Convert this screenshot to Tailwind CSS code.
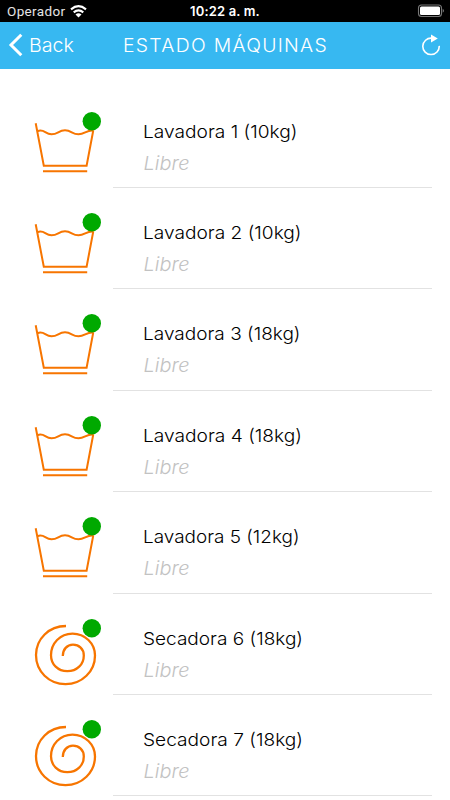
<!DOCTYPE html>
<html lang="es">
<head>
<meta charset="utf-8">
<title>Estado máquinas</title>
<script src="https://cdn.jsdelivr.net/npm/@tailwindcss/browser@4"></script>
</head>
<body class="bg-white">
<svg class="hidden">
  <symbol id="washer" viewBox="0 0 80 101.4">
    <g transform="translate(0 13.3)" fill="none" stroke="#f77500" stroke-width="2">
      <path d="M15.7 23 L23.8 65.5 H66.6 L73.3 30"/>
      <path d="M17.3 31 C24 28 25 34 31.5 34 S38.5 30 45 30 S52 34 58.5 34 S66 29.7 73.3 30.3"/>
      <path d="M23 71 H67.2"/>
    </g>
  </symbol>
  <symbol id="dryer" viewBox="0 0 80 101.4">
    <path transform="translate(0 16.4)" fill="none" stroke="#f77500" stroke-width="2.3" d="M46 15.6 C29 15.6 16 28.5 16 44.7 C16 61 29 73.7 45.5 73.7 C62 73.7 75 61 75 45 C75 33 65 23.2 52.5 23.2 C40 23.2 31 33 31 44.8 C31 54 38 60.8 47.3 60.8 C57 60.8 63.8 54 63.8 45 C63.8 38.5 59 34.3 53 34.3 C47 34.3 42.8 39 42.8 45.6"/>
  </symbol>
</svg>
<div class="w-[450px] h-[800px] overflow-hidden bg-white flex flex-col">
  <div class="h-[22px] shrink-0 bg-black text-white grid grid-cols-3 items-center font-['Inter',sans-serif] text-[13px] leading-[22px]">
    <div class="flex items-center pl-[7px] gap-[5px]">
      <span class="font-['Roboto',sans-serif] text-[13.5px] tracking-[0.35px] text-[#e5e5e5]">Operador</span>
      <svg class="w-[17px] h-[13px]" viewBox="0 0 17 13" fill="none" stroke="white" stroke-width="2.1"><path d="M1 4.4 Q8.5 -2 16 4.4M3.7 7.4 Q8.5 3.4 13.3 7.4"/><path fill="white" stroke="none" d="M5.5 9.5 Q8.5 7.1 11.5 9.5 L8.5 12.5Z"/></svg>
    </div>
    <div class="text-center font-semibold tracking-[0.15px] whitespace-nowrap">10:22 a. m.</div>
    <div class="flex justify-end pr-[5px]">
      <svg class="w-[28px] h-[14px]" viewBox="0 0 28 14"><rect x="1.5" y="1" width="23" height="11.5" rx="3" fill="none" stroke="#777" stroke-width="1.1"/><rect x="3" y="2.5" width="20" height="8.5" rx="1.5" fill="white"/><path d="M25.7 4.8 Q28.3 6.8 25.7 8.8Z" fill="#777"/></svg>
    </div>
  </div>
  <div class="h-[47px] shrink-0 bg-[#37b8f1] text-white flex items-center font-['Inter',sans-serif] font-light">
    <svg class="ml-[8px] w-[15px] h-[26px]" viewBox="0 0 15 26" fill="none" stroke="white" stroke-width="3"><path d="M13.3 1.8 L3 12 L13.3 22.2"/></svg>
    <svg class="ml-[6px] w-[45px] h-[26px] overflow-visible"><text x="0" y="19" textLength="100%" lengthAdjust="spacingAndGlyphs" class="text-[18.5px] fill-white">Back</text></svg>
    <svg class="ml-[49px] w-[205px] h-[26px] overflow-visible"><text x="0" y="19" textLength="100%" lengthAdjust="spacingAndGlyphs" class="text-[18px] tracking-[1.2px] fill-white">ESTADO MÁQUINAS</text></svg>
    <svg class="ml-auto mr-[8px] w-[20px] h-[24px]" viewBox="0 0 20 24"><path d="M9.7 4.2 A8.2 8.2 0 1 0 17.2 11.9" fill="none" stroke="white" stroke-width="1.6"/><path d="M9 0.5 L15.8 4.5 L9 8.5Z" fill="white"/></svg>
  </div>
  <main id="list" class="pt-[17.6px] font-['Inter',sans-serif]"></main>
</div>
<script>
  const machines = [
    ["washer", "Lavadora 1 (10kg)", "w-[154.5px]"],
    ["washer", "Lavadora 2 (10kg)", "w-[158.5px]"],
    ["washer", "Lavadora 3 (18kg)", "w-[157.5px]"],
    ["washer", "Lavadora 4 (18kg)", "w-[159px]"],
    ["washer", "Lavadora 5 (12kg)", "w-[156.5px]"],
    ["dryer", "Secadora 6 (18kg)", "w-[160px]"],
    ["dryer", "Secadora 7 (18kg)", "w-[160px]"]
  ];
  document.getElementById("list").innerHTML = machines.map(([icon, name, width]) => `
    <div class="h-[101.4px] flex pl-[20px] pr-[18px]">
      <svg class="w-[80px] h-[101.4px] shrink-0 overflow-visible"><use href="#${icon}" width="80" height="101.4"/><circle cx="71.8" cy="34.2" r="9.2" fill="#00a900"/></svg>
      <div class="ml-[13px] pl-[29.5px] pt-[33px] flex-1 border-b border-[#e2e2e2] whitespace-nowrap">
        <svg class="${width} h-[26px] overflow-visible"><text x="0" y="18.2" textLength="100%" lengthAdjust="spacingAndGlyphs" class="text-[17.8px] font-light fill-black">${name}</text></svg>
        <svg class="w-[46px] h-[30px] mt-[3px] overflow-visible"><text x="0.5" y="21.4" textLength="100%" lengthAdjust="spacingAndGlyphs" class="text-[18.5px] font-light italic fill-[#c2c2c2]">Libre</text></svg>
      </div>
    </div>`).join("");
</script>
</body>
</html>
